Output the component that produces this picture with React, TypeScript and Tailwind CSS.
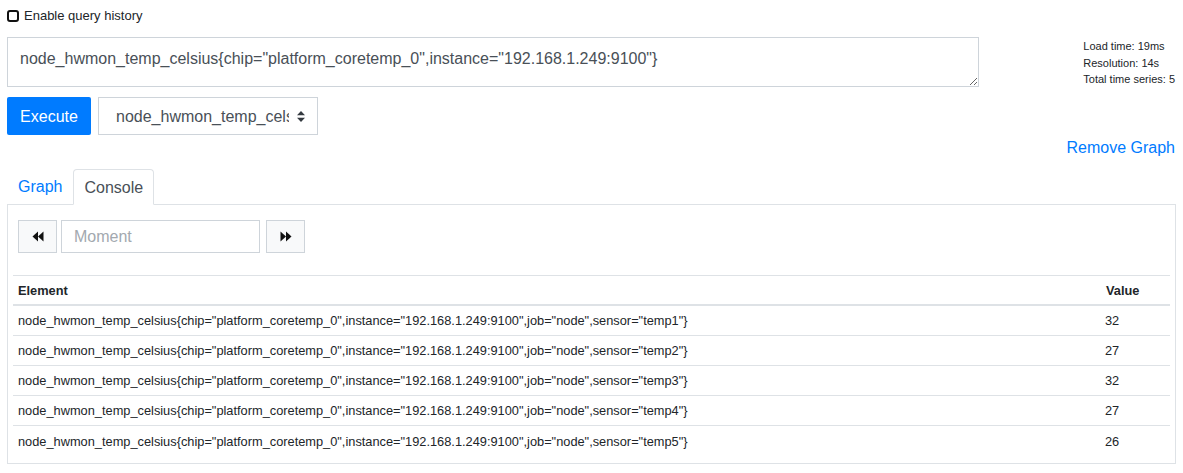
import * as React from 'react';

const query = 'node_hwmon_temp_celsius{chip="platform_coretemp_0",instance="192.168.1.249:9100"}';

const rows = [
  { sensor: 'temp1', value: '32' },
  { sensor: 'temp2', value: '27' },
  { sensor: 'temp3', value: '32' },
  { sensor: 'temp4', value: '27' },
  { sensor: 'temp5', value: '26' },
];

function Rewind() {
  return (
    <svg width="12" height="11" viewBox="0 0 12 11" fill="#111">
      <path d="M6 0.5 L0.5 5.5 L6 10.5 Z" />
      <path d="M11.5 0.5 L6 5.5 L11.5 10.5 Z" />
    </svg>
  );
}

function Forward() {
  return (
    <svg width="12" height="11" viewBox="0 0 12 11" fill="#111">
      <path d="M0.5 0.5 L6 5.5 L0.5 10.5 Z" />
      <path d="M6 0.5 L11.5 5.5 L6 10.5 Z" />
    </svg>
  );
}

function SortArrows() {
  return (
    <svg width="8" height="11" viewBox="0 0 8 11" fill="#343a40">
      <path d="M4 0 L8 4.2 L0 4.2 Z" />
      <path d="M4 11 L8 6.8 L0 6.8 Z" />
    </svg>
  );
}

export default function App() {
  return (
    <div className="w-[1183px] h-[473px] overflow-hidden bg-white font-['Liberation_Sans',Arial,sans-serif] text-[#212529]">
      {/* Query history toggle */}
      <div className="flex items-center gap-[5px] pl-[7px] pt-[8px] h-[23px] text-[13px]">
        <span className="w-[12px] h-[12px] rounded-[3px] border-[2.5px] border-[#111]" />
        <span>Enable query history</span>
      </div>

      {/* Expression + stats */}
      <div className="flex px-[7px] mt-[14px]">
        <div className="w-[972px]">
          <textarea
            readOnly
            defaultValue={query}
            className="block w-full h-[50px] border border-[#ced4da] px-[12px] pt-[9px] text-[16px] leading-[24px] text-[#495057] outline-none"
          />
          <div className="flex gap-[7px] mt-[10px]">
            <button className="h-[38px] w-[84px] pt-[1px] bg-[#007bff] text-white text-[16px] rounded-[2px]">Execute</button>
            <div className="h-[38px] w-[220px] border border-[#ced4da] flex items-center pl-[17px] pr-[12px] pt-[1px] text-[16px] text-[#495057]">
              <span className="w-[173px] overflow-hidden whitespace-nowrap">node_hwmon_temp_celsius</span>
              <span className="ml-auto">
                <SortArrows />
              </span>
            </div>
          </div>
        </div>
        <div className="ml-auto mr-[1px] text-[11px] leading-[16.5px] pt-[1px] whitespace-nowrap">
          <div>Load time: 19ms</div>
          <div>Resolution: 14s</div>
          <div>Total time series: 5</div>
        </div>
      </div>

      {/* Remove graph */}
      <div className="flex justify-end pr-[8px] pt-[1px] h-[24px] text-[16px] leading-[24px] text-[#007bff]">
        Remove Graph
      </div>

      {/* Tabs */}
      <div className="flex px-[7px] mt-[10px] text-[16px]">
        <div className="h-[35px] pl-[10px] pr-[10px] pt-[1px] flex items-center text-[#007bff] border border-transparent">Graph</div>
        <div className="h-[36px] -mb-px px-[10px] pt-[1px] flex items-center bg-white border border-[#dee2e6] border-b-white rounded-t-[4px] text-[#495057] relative z-10">
          Console
        </div>
      </div>

      {/* Console panel */}
      <div className="mx-[7px] border border-[#dee2e6] px-[5px] pb-[7px]">
        <div className="flex items-center ml-[5px] mt-[15px] h-[33px]">
          <button className="w-[39px] h-[33px] bg-[#f8f9fa] border border-[#ced4da] flex items-center justify-center">
            <Rewind />
          </button>
          <input
            placeholder="Moment"
            className="ml-[4px] w-[199px] h-[33px] border border-[#ced4da] px-[12px] text-[16px] text-[#495057] outline-none placeholder:text-[#a3a9af]"
          />
          <button className="ml-[6px] w-[39px] h-[33px] bg-[#f8f9fa] border border-[#ced4da] flex items-center justify-center">
            <Forward />
          </button>
        </div>

        <div className="mt-[22px] text-[12.8px]">
          <div className="flex h-[31px] pt-[2px] border-t border-[#dee2e6] border-b-2 font-bold">
            <div className="flex-1 pl-[5px] flex items-center">Element</div>
            <div className="w-[69px] pl-[5px] flex items-center">Value</div>
          </div>
          {rows.map((r, i) => (
            <div
              key={r.sensor}
              className={`flex h-[30px] pt-[1px] border-[#dee2e6] ${i < rows.length - 1 ? 'border-b' : ''}`}
            >
              <div className="flex-1 pl-[5px] flex items-center whitespace-nowrap">
                {`node_hwmon_temp_celsius{chip="platform_coretemp_0",instance="192.168.1.249:9100",job="node",sensor="${r.sensor}"}`}
              </div>
              <div className="w-[69px] pl-[4px] flex items-center">{r.value}</div>
            </div>
          ))}
        </div>
      </div>
    </div>
  );
}
